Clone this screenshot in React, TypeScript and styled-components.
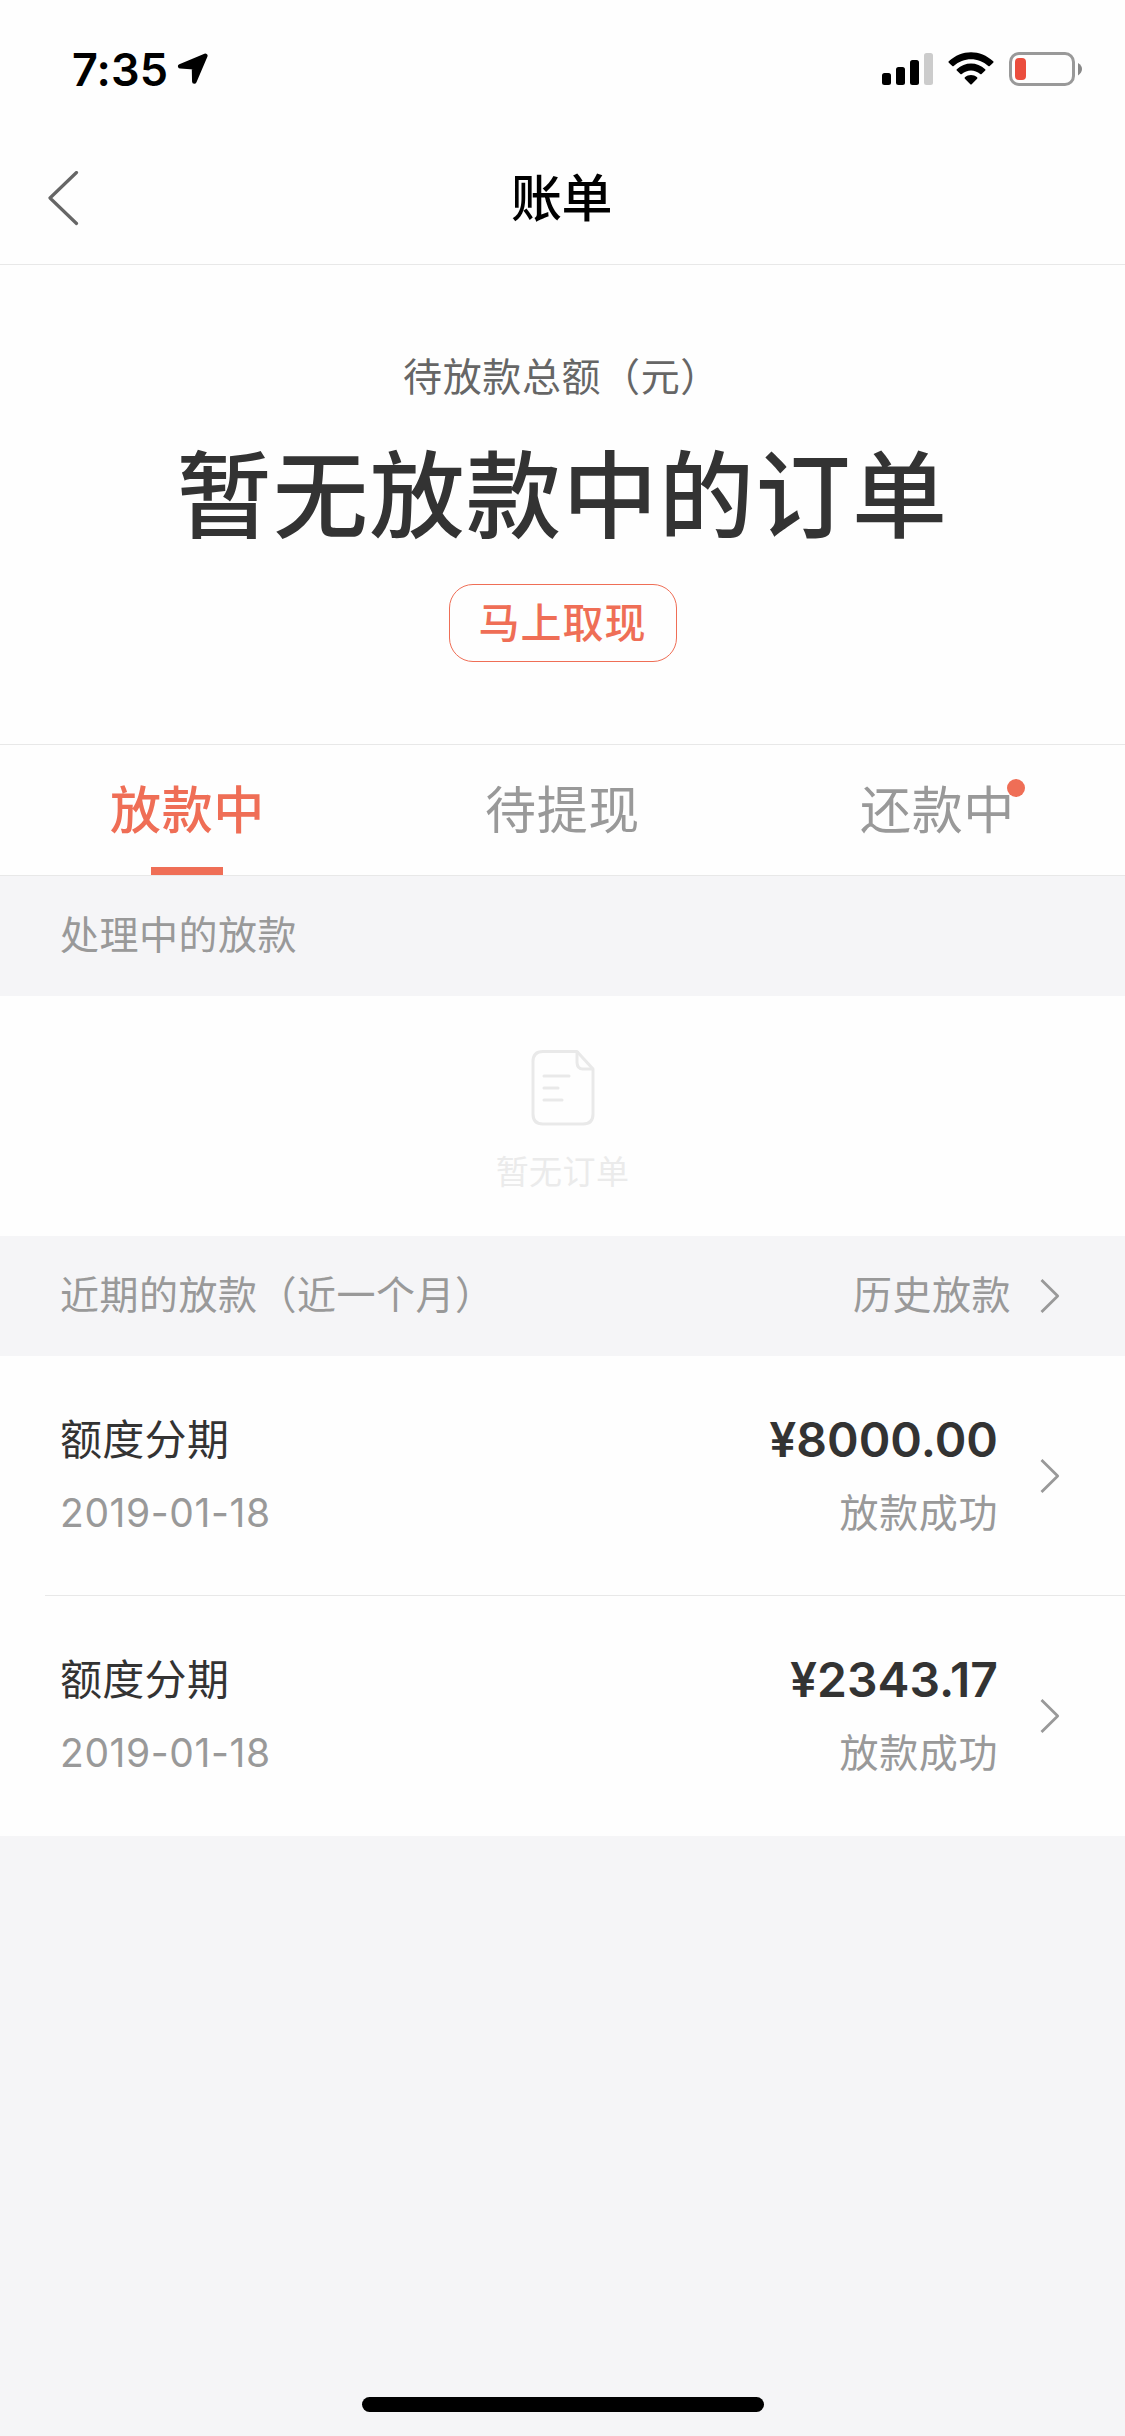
import React from "react";
import styled, { createGlobalStyle } from "styled-components";

const accent = "#ef6e56";

const GlobalStyle = createGlobalStyle`
  * { box-sizing: border-box; }
  body {
    margin: 0;
    background: #f5f5f7;
    font-family: Inter, "Noto Sans CJK SC", sans-serif;
  }
`;

const Screen = styled.div`
  width: 1125px;
  height: 2436px;
  display: flex;
  flex-direction: column;
  background: #f5f5f7;
  overflow: hidden;
`;

const StatusBar = styled.header`
  height: 132px;
  padding: 52px 43px 0 72px;
  display: flex;
  justify-content: space-between;
  align-items: flex-start;
  background: #fefefe;
`;

const Clock = styled.div`
  display: flex;
  align-items: flex-start;
  gap: 9px;
  font-size: 45px;
  font-weight: 600;
  line-height: 35px;
  letter-spacing: 0.1px;
  color: #000;
`;

const StatusIcons = styled.div`
  display: flex;
  gap: 15px;
`;

const NavBar = styled.nav`
  height: 133px;
  padding: 0 48px;
  display: grid;
  grid-template-columns: 1fr auto 1fr;
  align-items: center;
  background: #fefefe;
  border-bottom: 1px solid #e8e8e8;
`;

const NavTitle = styled.h1`
  margin: 0;
  padding: 2px 2px 0 0;
  font-size: 51px;
  font-weight: 500;
  line-height: 60px;
  letter-spacing: -0.5px;
  color: #000;
`;

const Summary = styled.section`
  height: 479px;
  padding-top: 82px;
  display: flex;
  flex-direction: column;
  align-items: center;
  background: #fefefe;
`;

const SummaryLabel = styled.div`
  margin-left: -2px;
  font-size: 39px;
  line-height: 60px;
  letter-spacing: 0.6px;
  color: #666;
`;

const SummaryValue = styled.div`
  margin-top: 25px;
  font-size: 95px;
  font-weight: 500;
  line-height: 130px;
  letter-spacing: 1.5px;
  color: #333;
`;

const CashButton = styled.button`
  margin: 22px 0 0;
  width: 228px;
  height: 78px;
  padding: 0;
  border: 1px solid ${accent};
  border-radius: 24px;
  background: transparent;
  font: 500 41px/74px Inter, "Noto Sans CJK SC", sans-serif;
  letter-spacing: 1px;
  color: ${accent};
`;

const Tabs = styled.div`
  height: 132px;
  display: grid;
  grid-template-columns: repeat(3, 1fr);
  background: #fefefe;
  border-top: 1px solid #e8e8e8;
  border-bottom: 1px solid #e8e8e8;
`;

const Tab = styled.div<{ $active?: boolean }>`
  display: flex;
  flex-direction: column;
  align-items: center;
  justify-content: space-between;
  font-size: 51px;
  font-weight: ${(p) => (p.$active ? 500 : 400)};
  color: ${(p) => (p.$active ? accent : "#999")};
  &::after {
    content: "";
    width: 72px;
    height: 8px;
    margin-right: 1px;
    background: ${(p) => (p.$active ? accent : "transparent")};
  }
`;

const TabLabel = styled.span`
  position: relative;
  margin-top: 28px;
  line-height: 76px;
  letter-spacing: 0.7px;
`;

const Dot = styled.i`
  position: absolute;
  top: 6px;
  right: -10px;
  width: 18px;
  height: 18px;
  border-radius: 50%;
  background: ${accent};
`;

const SectionHeader = styled.div`
  height: 120px;
  padding: 0 65px 0 60px;
  display: flex;
  align-items: center;
  justify-content: space-between;
  font-size: 39px;
  letter-spacing: 0.5px;
  color: #999;
`;

const SectionText = styled.span`
  line-height: 60px;
  padding-bottom: 2px;
`;

const HistoryLink = styled.div`
  display: flex;
  align-items: center;
  gap: 29px;
`;

const Empty = styled.div`
  height: 240px;
  padding-top: 54px;
  display: flex;
  flex-direction: column;
  align-items: center;
  background: #fefefe;
  font-size: 33px;
  letter-spacing: 0.4px;
  line-height: 48px;
  color: #ebebeb;
`;

const EmptyText = styled.span`
  margin-top: 22px;
`;

const List = styled.div`
  background: #fefefe;
`;

const Item = styled.div`
  height: 240px;
  margin-left: 45px;
  padding: 0 65px 0 15px;
  display: flex;
  align-items: center;
  border-bottom: 1px solid #e8e8e8;
  &:last-child { border-bottom-color: transparent; }
`;

const ItemColumn = styled.div<{ $end?: boolean }>`
  display: flex;
  flex-direction: column;
  gap: 13px;
  padding-top: 2px;
  margin-left: ${(p) => (p.$end ? "auto" : "0")};
  margin-right: ${(p) => (p.$end ? "42px" : "0")};
  align-items: ${(p) => (p.$end ? "flex-end" : "flex-start")};
`;

const Name = styled.span`
  font-size: 42px;
  line-height: 60px;
  letter-spacing: 0.3px;
  color: #333;
`;

const Amount = styled.span`
  font-size: 48px;
  font-weight: 600;
  line-height: 60px;
  color: #333;
`;

const Detail = styled.span`
  font-size: 39px;
  line-height: 60px;
  letter-spacing: 0.6px;
  color: #999;
`;

const Footer = styled.footer`
  margin-top: auto;
  padding-bottom: 24px;
  display: flex;
  justify-content: center;
`;

const HomeIndicator = styled.div`
  width: 402px;
  height: 15px;
  border-radius: 8px;
  background: #000;
`;

const LocationArrow = () => (
  <svg width="31" height="33" viewBox="0 0 31 33">
    <path d="M28.3 3.8 3.2 14.3 17 15.2 17.3 29.5Z" fill="#000" stroke="#000" strokeWidth="4.5" strokeLinejoin="round" />
  </svg>
);

const Signal = () => (
  <svg width="51" height="34" viewBox="0 0 51 34">
    <rect x="0" y="21" width="9" height="12" rx="2.5" />
    <rect x="14" y="15" width="9" height="18" rx="2.5" />
    <rect x="28" y="8" width="9" height="25" rx="2.5" />
    <rect x="42" y="1" width="9" height="32" rx="2.5" fill="#ccc" />
  </svg>
);

const Wifi = () => (
  <svg width="46" height="34" viewBox="0 0 46 34">
    <path d="M0.8 9.3C13.5-2.9 32.5-2.9 45.2 9.3Q45.9 10 45.2 10.7L41.7 14Q41 14.6 40.3 14C30.5 4.9 15.5 4.9 5.7 14Q5 14.6 4.3 14L0.8 10.7Q0.1 10 0.8 9.3Z" />
    <path d="M8.8 17.2C17 9.5 29 9.5 37.2 17.2Q37.9 17.9 37.2 18.6L33.6 22Q32.9 22.6 32.2 22C26.8 17.3 19.2 17.3 13.8 22Q13.1 22.6 12.4 22L8.8 18.6Q8.1 17.9 8.8 17.2Z" />
    <path d="M16.9 25.3C20.6 22.2 25.4 22.2 29.1 25.3Q29.8 26 29.1 26.7L23.7 32.2Q23 32.9 22.3 32.2L16.9 26.7Q16.2 26 16.9 25.3Z" />
  </svg>
);

const Battery = () => (
  <svg width="73" height="34" viewBox="0 0 73 34">
    <rect x="1.5" y="1.5" width="63" height="31" rx="8.5" fill="none" stroke="#999" strokeWidth="3" />
    <rect x="6" y="6" width="11" height="22" rx="4" fill="#eb4d3d" />
    <path d="M69 11Q73 13.5 73 17T69 23.5Z" fill="#888" />
  </svg>
);

const BackIcon = () => (
  <svg width="31" height="55" viewBox="0 0 31 55">
    <path d="M28.5 1.5 2 27 28.5 52.5" fill="none" stroke="#666" strokeWidth="3.2" strokeLinecap="round" strokeLinejoin="round" />
  </svg>
);

const Chevron = () => (
  <svg width="20" height="34" viewBox="0 0 20 34">
    <path d="M1.5 1 17.7 17 1.5 33" fill="none" stroke="#999" strokeWidth="2.8" strokeLinejoin="round" />
  </svg>
);

const DocumentIcon = () => (
  <svg width="64" height="76" viewBox="0 0 64 76" fill="none" stroke="#e9e9e9" strokeWidth="3" strokeLinejoin="round" strokeLinecap="round">
    <path d="M46 1.5H12Q2 1.5 2 11.5V64Q2 74 12 74H52Q62 74 62 64V19Z" />
    <path d="M46 2V12Q46 19 52 19H61" />
    <path d="M13 26H38M13 38H27M13 50H31" />
  </svg>
);

const loans = [
  { name: "额度分期", date: "2019-01-18", amount: "¥8000.00", status: "放款成功" },
  { name: "额度分期", date: "2019-01-18", amount: "¥2343.17", status: "放款成功" },
];

export default function App() {
  return (
    <Screen lang="zh-CN">
      <GlobalStyle />
      <StatusBar>
        <Clock>
          <span>7:35</span>
          <LocationArrow />
        </Clock>
        <StatusIcons>
          <Signal />
          <Wifi />
          <Battery />
        </StatusIcons>
      </StatusBar>
      <NavBar>
        <BackIcon />
        <NavTitle>账单</NavTitle>
      </NavBar>
      <Summary>
        <SummaryLabel>待放款总额（元）</SummaryLabel>
        <SummaryValue>暂无放款中的订单</SummaryValue>
        <CashButton>马上取现</CashButton>
      </Summary>
      <Tabs>
        <Tab $active>
          <TabLabel>放款中</TabLabel>
        </Tab>
        <Tab>
          <TabLabel>待提现</TabLabel>
        </Tab>
        <Tab>
          <TabLabel>
            还款中
            <Dot />
          </TabLabel>
        </Tab>
      </Tabs>
      <SectionHeader>
        <SectionText>处理中的放款</SectionText>
      </SectionHeader>
      <Empty>
        <DocumentIcon />
        <EmptyText>暂无订单</EmptyText>
      </Empty>
      <SectionHeader>
        <SectionText>近期的放款（近一个月）</SectionText>
        <HistoryLink>
          <SectionText>历史放款</SectionText>
          <Chevron />
        </HistoryLink>
      </SectionHeader>
      <List>
        {loans.map((loan) => (
          <Item key={loan.amount}>
            <ItemColumn>
              <Name>{loan.name}</Name>
              <Detail>{loan.date}</Detail>
            </ItemColumn>
            <ItemColumn $end>
              <Amount>{loan.amount}</Amount>
              <Detail>{loan.status}</Detail>
            </ItemColumn>
            <Chevron />
          </Item>
        ))}
      </List>
      <Footer>
        <HomeIndicator />
      </Footer>
    </Screen>
  );
}
